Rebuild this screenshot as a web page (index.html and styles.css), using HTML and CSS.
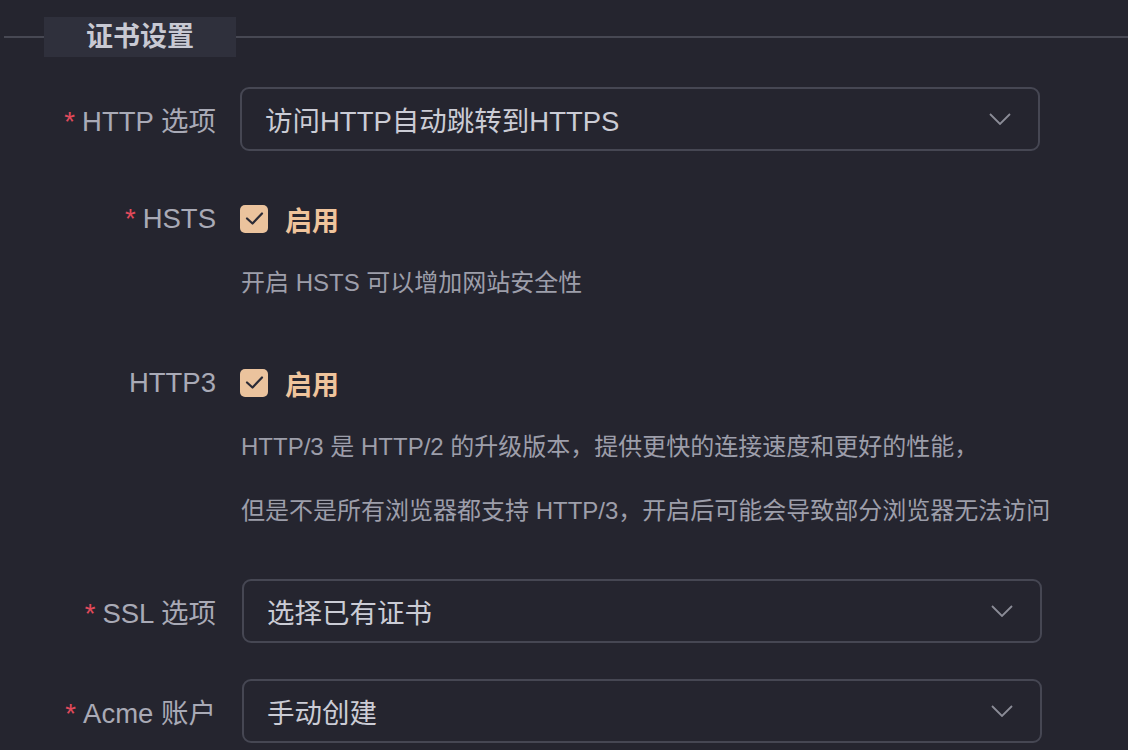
FILE: index.html
```html
<!DOCTYPE html>
<html lang="zh-CN">
<head>
<meta charset="UTF-8">
<title>证书设置</title>
<link rel="stylesheet" href="styles.css">
</head>
<body>
<div class="panel">

  <div class="legend-bar">
    <span class="legend-line short"></span>
    <span class="legend">证书设置</span>
    <span class="legend-line"></span>
  </div>

  <div class="form">

    <div class="item">
      <div class="row">
        <label class="label"><span class="req">*</span>HTTP 选项</label>
        <div class="select">
          <span>访问HTTP自动跳转到HTTPS</span>
          <svg class="arrow" width="22" height="12" viewBox="0 0 22 12"><polyline points="1,1 11,11 21,1" fill="none" stroke="#8b8c97" stroke-width="1.8"/></svg>
        </div>
      </div>
    </div>

    <div class="item">
      <div class="row">
        <label class="label"><span class="req">*</span>HSTS</label>
        <div class="check">
          <span class="box"><svg width="28" height="28" viewBox="0 0 28 28"><polyline points="7,13.5 12.5,18.5 22,8.5" fill="none" stroke="#2b2b36" stroke-width="2.2" stroke-linecap="round" stroke-linejoin="round"/></svg></span>
          <span class="check-text">启用</span>
        </div>
      </div>
      <div class="help">开启 HSTS 可以增加网站安全性</div>
    </div>

    <div class="item">
      <div class="row">
        <label class="label">HTTP3</label>
        <div class="check">
          <span class="box"><svg width="28" height="28" viewBox="0 0 28 28"><polyline points="7,13.5 12.5,18.5 22,8.5" fill="none" stroke="#2b2b36" stroke-width="2.2" stroke-linecap="round" stroke-linejoin="round"/></svg></span>
          <span class="check-text">启用</span>
        </div>
      </div>
      <div class="help">
        HTTP/3 是 HTTP/2 的升级版本，提供更快的连接速度和更好的性能，<br>
        但是不是所有浏览器都支持 HTTP/3，开启后可能会导致部分浏览器无法访问
      </div>
    </div>

    <div class="item">
      <div class="row shifted">
        <label class="label"><span class="req">*</span>SSL 选项</label>
        <div class="select">
          <span>选择已有证书</span>
          <svg class="arrow" width="22" height="12" viewBox="0 0 22 12"><polyline points="1,1 11,11 21,1" fill="none" stroke="#8b8c97" stroke-width="1.8"/></svg>
        </div>
      </div>
    </div>

    <div class="item">
      <div class="row shifted">
        <label class="label"><span class="req">*</span>Acme 账户</label>
        <div class="select">
          <span>手动创建</span>
          <svg class="arrow" width="22" height="12" viewBox="0 0 22 12"><polyline points="1,1 11,11 21,1" fill="none" stroke="#8b8c97" stroke-width="1.8"/></svg>
        </div>
      </div>
    </div>

  </div>
</div>
</body>
</html>
```

FILE: styles.css
```css
body {
  margin: 0;
  background-color: #25252f;
  font-family: "Liberation Sans", "Noto Sans CJK SC", sans-serif;
  color: #a9aab6;
  height: 750px;
  overflow: hidden;
}

.panel {
  padding: 17px 0 0 4px;
}

/* 标题行 */
.legend-bar {
  display: flex;
  align-items: center;
  height: 40px;
}

.legend-line {
  flex: 1;
  height: 2px;
  background-color: #474853;
}

.legend-line.short {
  flex: 0 0 40px;
}

.legend {
  width: 192px;
  height: 40px;
  line-height: 40px;
  text-align: center;
  background-color: #2f303c;
  color: #c8c9d3;
  font-size: 27px;
  font-weight: bold;
}

.form {
  margin-top: 30px;
}

.item {
  margin-bottom: 36px;
}

.row {
  display: flex;
  align-items: center;
  min-height: 64px;
}

.label {
  width: 212px;
  flex: 0 0 212px;
  text-align: right;
  font-size: 27.5px;
  color: #a9aab6;
}

.req {
  color: #e14a5b;
  margin-right: 7px;
}

.select {
  margin-left: 24px;
  width: 800px;
  height: 64px;
  box-sizing: border-box;
  border: 2px solid #464753;
  border-radius: 9px;
  display: flex;
  align-items: center;
  justify-content: space-between;
  padding: 0 27px 0 23px;
  font-size: 27.5px;
  color: #cbccd5;
}

.row.shifted .select {
  margin-left: 26px;
}

.arrow {
  display: block;
}

/* 复选框 */
.check {
  margin-left: 24px;
  display: flex;
  align-items: center;
}

.box {
  width: 28px;
  height: 28px;
  border-radius: 5px;
  background-color: #ebc39d;
  display: block;
}

.box svg {
  display: block;
}

.check-text {
  margin-left: 17px;
  font-size: 27px;
  font-weight: bold;
  color: #efc49c;
}

.help {
  margin-left: 237px;
  font-size: 24px;
  line-height: 64px;
  color: #9d9eaa;
}
```
